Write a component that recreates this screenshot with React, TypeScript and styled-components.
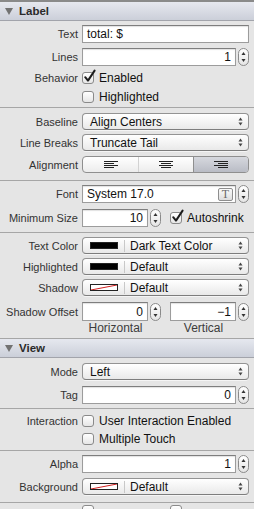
import React from "react";
import styled, { createGlobalStyle } from "styled-components";

const GlobalStyle = createGlobalStyle`
  html, body {
    margin: 0;
    padding: 0;
    overflow: hidden;
    background: #e5e5e5;
  }
  body {
    font-family: "Liberation Sans", Arial, sans-serif;
    -webkit-font-smoothing: antialiased;
  }
`;

const Panel = styled.div`
  width: 254px;
  height: 509px;
  overflow: hidden;
  box-sizing: border-box;
  background: #e5e5e5;
  border-top: 2px solid #8a8a8a;
`;

const Header = styled.div`
  height: 18px;
  display: flex;
  align-items: center;
  gap: 6px;
  padding-left: 5px;
  background: linear-gradient(#e6e8ef, #cbcfd9);
  border-bottom: 1px solid #a2a4ab;
  font-size: 11.5px;
  font-weight: bold;
  color: #2a2a2a;
`;

const Group = styled.div<{ $pb: number }>`
  display: flex;
  flex-direction: column;
  padding: 0 5px ${(p) => p.$pb}px 0;
  border-bottom: 1px solid #a6a6a6;
`;

const Row = styled.div<{ $h: number; $mt: number }>`
  display: grid;
  grid-template-columns: 78px 1fr;
  column-gap: 4px;
  align-items: center;
  height: ${(p) => p.$h}px;
  margin-top: ${(p) => p.$mt}px;
`;

const Label = styled.span`
  text-align: right;
  font-size: 11px;
  color: #333;
  white-space: nowrap;
`;

const Cell = styled.div`
  display: flex;
  align-items: center;
  gap: 2px;
  height: 100%;
  min-width: 0;
`;

const Halves = styled.div`
  display: grid;
  grid-template-columns: 1fr 1fr;
  column-gap: 9px;
  height: 100%;
  align-items: center;
`;

const Field = styled.div<{ $right?: boolean }>`
  flex: 1;
  height: 100%;
  box-sizing: border-box;
  display: flex;
  align-items: center;
  justify-content: ${(p) => (p.$right ? "flex-end" : "flex-start")};
  padding: 0 4px;
  background: #fff;
  border: 1px solid #9c9c9c;
  border-top-color: #7e7e7e;
  box-shadow: inset 0 1px 1px rgba(0, 0, 0, 0.12);
  font-size: 12px;
  color: #111;
  white-space: nowrap;
`;

const FontIcon = styled.span`
  margin-left: auto;
  margin-right: -2px;
  width: 15px;
  height: 13px;
  box-sizing: border-box;
  border: 1px solid #8e8e8e;
  border-radius: 2px;
  background: linear-gradient(#fafafa, #dedede);
  display: flex;
  align-items: center;
  justify-content: center;
  font-family: "Liberation Serif", "Times New Roman", serif;
  font-size: 12px;
  line-height: 1;
  color: #6a6a6a;
`;

const StepperBox = styled.svg`
  flex: none;
  width: 11px;
  height: 18px;
`;

const Popup = styled.div`
  height: 100%;
  box-sizing: border-box;
  display: flex;
  align-items: center;
  padding: 0 5px 0 7px;
  border: 1px solid #939393;
  border-bottom-color: #7d7d7d;
  border-radius: 4px;
  background: linear-gradient(#ffffff, #f4f4f4 50%, #e9e9e9);
  box-shadow: 0 1px 0 rgba(255, 255, 255, 0.6);
  font-size: 12px;
  color: #111;
  white-space: nowrap;
`;

const PopupText = styled.span`
  flex: 1;
`;

const Swatch = styled.span<{ $fill: string }>`
  flex: none;
  width: 28px;
  height: 7px;
  box-sizing: border-box;
  border: 1px solid #222;
  background: ${(p) => p.$fill};
  position: relative;
  overflow: hidden;
`;

const SwatchLine = styled.svg`
  position: absolute;
  inset: 0;
  width: 100%;
  height: 100%;
`;

const Divider = styled.span`
  flex: none;
  width: 1px;
  height: 12px;
  margin: 0 5px 0 6px;
  background: #c8c8c8;
`;

const Segmented = styled.div`
  height: 100%;
  box-sizing: border-box;
  display: grid;
  grid-template-columns: 1fr 1fr 1fr;
  border: 1px solid #8f8f8f;
  border-radius: 4px;
  overflow: hidden;
  background: linear-gradient(#ffffff, #ececec);
`;

const Segment = styled.div<{ $on?: boolean; $first?: boolean }>`
  display: flex;
  align-items: center;
  justify-content: center;
  border-left: ${(p) => (p.$first ? "none" : p.$on ? "1px solid #8f8f8f" : "1px solid #d2d2d2")};
  background: ${(p) => (p.$on ? "linear-gradient(#d6d8de, #b9bcc5)" : "transparent")};
`;

const CheckRow = styled.label`
  display: flex;
  align-items: center;
  gap: 5px;
  font-size: 12px;
  color: #111;
  white-space: nowrap;
`;

const Box = styled.span`
  flex: none;
  width: 12px;
  height: 12px;
  box-sizing: border-box;
  border: 1px solid #8a8a8a;
  border-radius: 3px;
  background: linear-gradient(#ffffff, #e6e6e6);
  position: relative;
`;

const Tick = styled.svg`
  position: absolute;
  left: 0px;
  top: -3px;
  width: 13px;
  height: 13px;
  overflow: visible;
`;

const Caption = styled.span`
  padding-right: 12px;
  text-align: center;
  font-size: 12px;
  color: #3c3c3c;
`;

const Disclosure = () => (
  <svg width="8" height="7" viewBox="0 0 8 7">
    <polygon points="0,0 8,0 4,7" fill="#727272" />
  </svg>
);

const Stepper = () => (
  <StepperBox viewBox="0 0 11 18">
    <defs>
      <linearGradient id="stg" x1="0" y1="0" x2="0" y2="1">
        <stop offset="0" stopColor="#ffffff" />
        <stop offset="1" stopColor="#e4e4e4" />
      </linearGradient>
    </defs>
    <rect x="0.5" y="0.5" width="10" height="17" rx="5" fill="url(#stg)" stroke="#8a8a8a" />
    <polygon points="5.5,4 7.5,7 3.5,7" fill="#333" />
    <polygon points="3.5,11 7.5,11 5.5,14" fill="#333" />
  </StepperBox>
);

const PopArrows = () => (
  <svg width="5" height="9" viewBox="0 0 5 9">
    <polygon points="2.5,0.5 4.5,3.5 0.5,3.5" fill="#444" />
    <polygon points="0.5,5.5 4.5,5.5 2.5,8.5" fill="#444" />
  </svg>
);

const AlignIcon: React.FC<{ kind: "left" | "center" | "right" }> = ({ kind }) => {
  const widths = [14, 10, 14, 10];
  return (
    <svg width="14" height="7" viewBox="0 0 14 7">
      {widths.map((w, i) => {
        const x = kind === "left" ? 0 : kind === "right" ? 14 - w : (14 - w) / 2;
        return <rect key={i} x={x} y={i * 2} width={w} height="1" fill="#222" />;
      })}
    </svg>
  );
};

const Check: React.FC<{ on?: boolean; children?: React.ReactNode }> = ({ on, children }) => (
  <CheckRow>
    <Box>
      {on && (
        <Tick viewBox="0 0 13 13">
          <path d="M2.2 7.2 L5 10.6 L11.6 0.6" fill="none" stroke="#1c1c1c" strokeWidth="2" strokeLinecap="round" strokeLinejoin="round" />
        </Tick>
      )}
    </Box>
    {children}
  </CheckRow>
);

const ColorPopup: React.FC<{ fill: string; shadow?: boolean; text: string }> = ({ fill, shadow, text }) => (
  <Popup>
    <Swatch $fill={fill}>
      {shadow && (
        <SwatchLine viewBox="0 0 26 5" preserveAspectRatio="none">
          <line x1="0" y1="5" x2="26" y2="0" stroke="#d02020" strokeWidth="1" />
        </SwatchLine>
      )}
    </Swatch>
    <Divider />
    <PopupText>{text}</PopupText>
    <PopArrows />
  </Popup>
);

const SelectPopup: React.FC<{ text: string }> = ({ text }) => (
  <Popup>
    <PopupText>{text}</PopupText>
    <PopArrows />
  </Popup>
);

const NumberField: React.FC<{ value: string }> = ({ value }) => (
  <Cell>
    <Field $right>{value}</Field>
    <Stepper />
  </Cell>
);

export default function App() {
  return (
    <>
      <GlobalStyle />
      <Panel>
        <Header>
          <Disclosure />
          Label
        </Header>

        <Group $pb={2}>
          <Row $h={18} $mt={4}>
            <Label>Text</Label>
            <Field>total: $</Field>
          </Row>
          <Row $h={18} $mt={5}>
            <Label>Lines</Label>
            <NumberField value="1" />
          </Row>
          <Row $h={16} $mt={4}>
            <Label>Behavior</Label>
            <Check on>Enabled</Check>
          </Row>
          <Row $h={16} $mt={3}>
            <span />
            <Check>Highlighted</Check>
          </Row>
        </Group>

        <Group $pb={7}>
          <Row $h={17} $mt={5}>
            <Label>Baseline</Label>
            <SelectPopup text="Align Centers" />
          </Row>
          <Row $h={17} $mt={4}>
            <Label>Line Breaks</Label>
            <SelectPopup text="Truncate Tail" />
          </Row>
          <Row $h={17} $mt={5}>
            <Label>Alignment</Label>
            <Segmented>
              <Segment $first>
                <AlignIcon kind="left" />
              </Segment>
              <Segment>
                <AlignIcon kind="center" />
              </Segment>
              <Segment $on>
                <AlignIcon kind="right" />
              </Segment>
            </Segmented>
          </Row>
        </Group>

        <Group $pb={5}>
          <Row $h={18} $mt={4}>
            <Label>Font</Label>
            <Cell>
              <Field>
                System 17.0
                <FontIcon>T</FontIcon>
              </Field>
              <Stepper />
            </Cell>
          </Row>
          <Row $h={18} $mt={6}>
            <Label>Minimum Size</Label>
            <Halves>
              <NumberField value="10" />
              <Check on>Autoshrink</Check>
            </Halves>
          </Row>
        </Group>

        <Group $pb={5}>
          <Row $h={17} $mt={4}>
            <Label>Text Color</Label>
            <ColorPopup fill="#000" text="Dark Text Color" />
          </Row>
          <Row $h={17} $mt={4}>
            <Label>Highlighted</Label>
            <ColorPopup fill="#000" text="Default" />
          </Row>
          <Row $h={17} $mt={4}>
            <Label>Shadow</Label>
            <ColorPopup fill="#fff" shadow text="Default" />
          </Row>
          <Row $h={19} $mt={6}>
            <Label>Shadow Offset</Label>
            <Halves>
              <NumberField value="0" />
              <NumberField value="−1" />
            </Halves>
          </Row>
          <Row $h={12} $mt={0}>
            <span />
            <Halves>
              <Caption>Horizontal</Caption>
              <Caption>Vertical</Caption>
            </Halves>
          </Row>
        </Group>

        <Header>
          <Disclosure />
          View
        </Header>

        <Group $pb={4}>
          <Row $h={17} $mt={5}>
            <Label>Mode</Label>
            <SelectPopup text="Left" />
          </Row>
          <Row $h={18} $mt={6}>
            <Label>Tag</Label>
            <NumberField value="0" />
          </Row>
        </Group>

        <Group $pb={3}>
          <Row $h={16} $mt={4}>
            <Label>Interaction</Label>
            <Check>User Interaction Enabled</Check>
          </Row>
          <Row $h={16} $mt={2}>
            <span />
            <Check>Multiple Touch</Check>
          </Row>
        </Group>

        <Group $pb={7}>
          <Row $h={18} $mt={4}>
            <Label>Alpha</Label>
            <NumberField value="1" />
          </Row>
          <Row $h={17} $mt={5}>
            <Label>Background</Label>
            <ColorPopup fill="#fff" shadow text="Default" />
          </Row>
        </Group>

        {/* next row is cut off by the window: only the checkbox tops show */}
        <Group $pb={3}>
          <Row $h={16} $mt={0}>
            <span />
            <Halves>
              <Check />
              <Check />
            </Halves>
          </Row>
        </Group>
      </Panel>
    </>
  );
}
